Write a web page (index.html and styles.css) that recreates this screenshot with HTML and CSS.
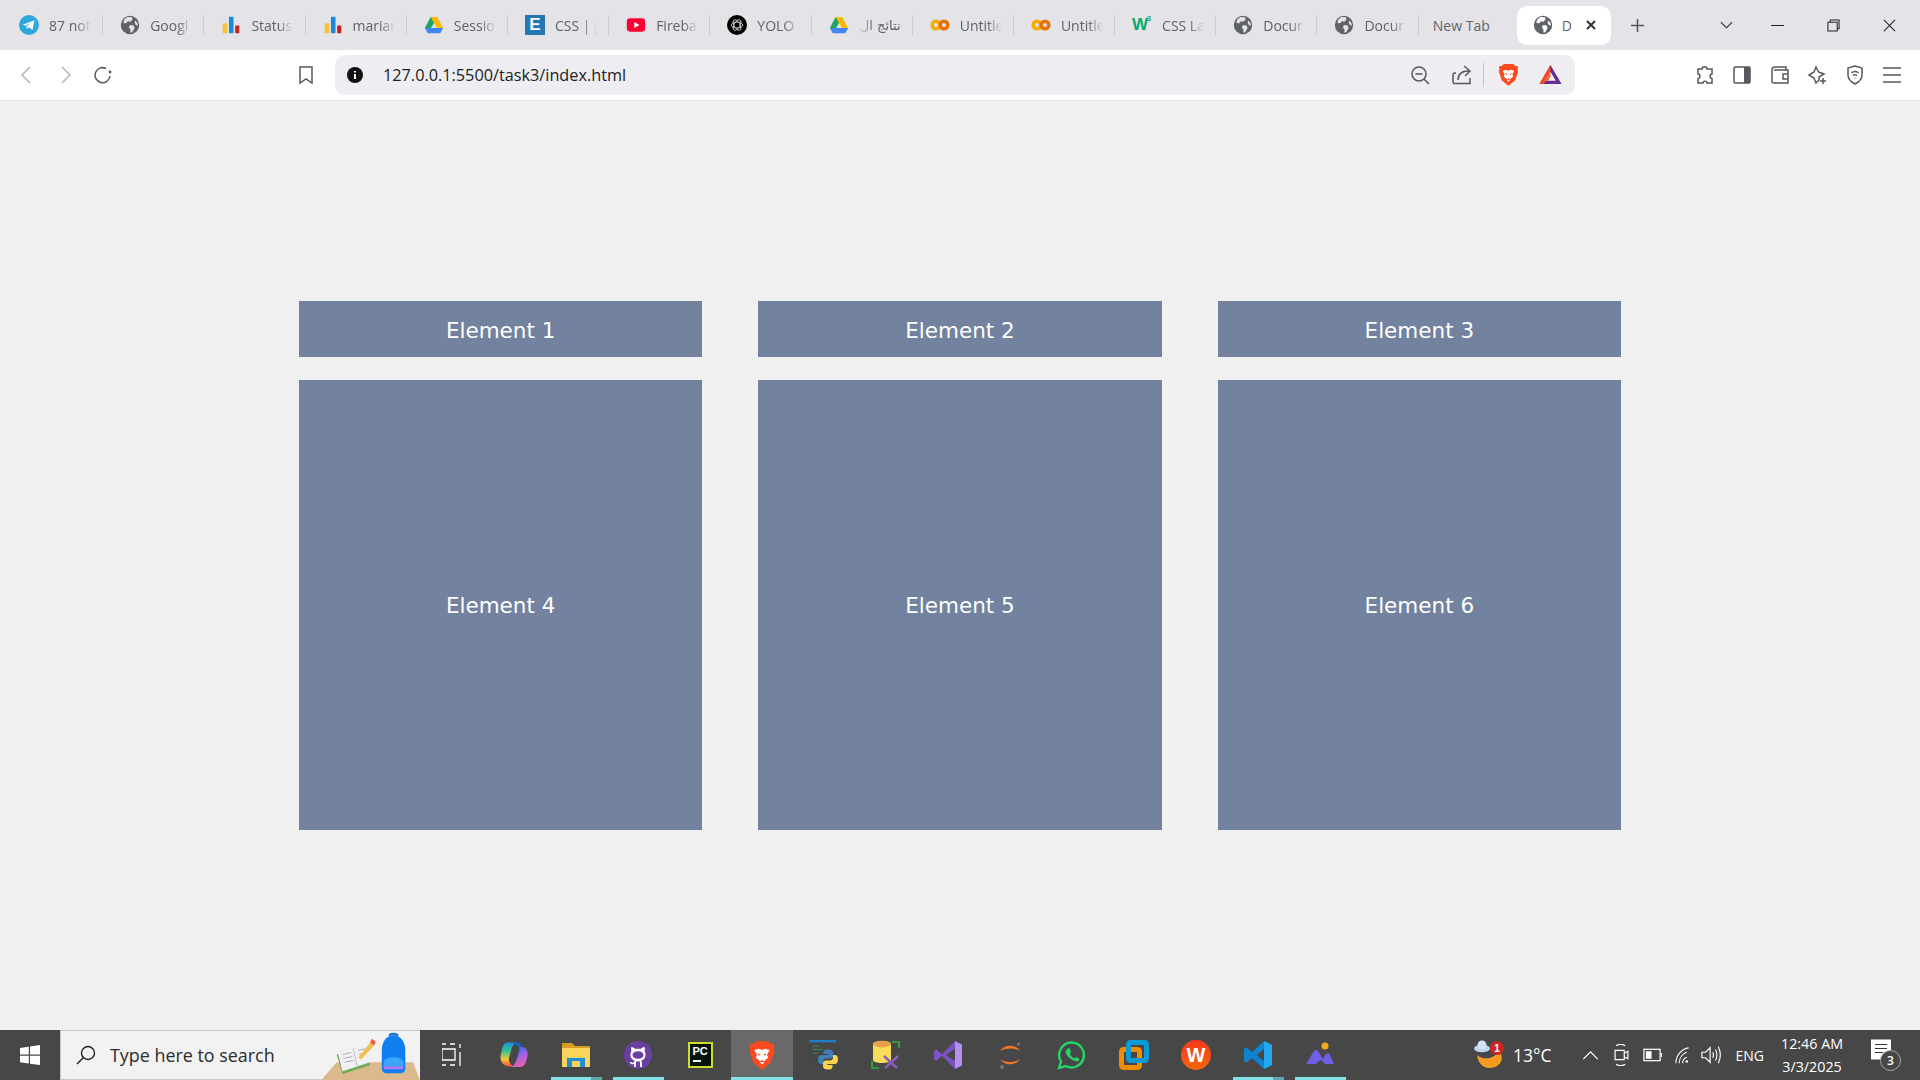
FILE: index.html
```html
<!DOCTYPE html>
<html lang="en">
<head>
    <meta charset="UTF-8">
    <meta name="viewport" content="width=device-width, initial-scale=1.0">
    <title>Document</title>
    <link rel="stylesheet" href="styles.css">
</head>
<body>
    <svg class="icon-defs" aria-hidden="true">
        <symbol id="i-telegram" viewBox="0 0 24 24">
            <circle cx="12" cy="12" r="12" fill="#2ea6de"/>
            <path d="M4.5 11.8 18.5 6.3 16.2 18 11.6 14.6 9.4 16.8 9 13.4 15.6 8.6 7.6 12.9Z" fill="#fff"/>
        </symbol>
        <symbol id="i-globe" viewBox="0 0 24 24">
            <circle cx="12" cy="12" r="11" fill="#5f6368"/>
            <path d="M9 2.5 14.5 2.6 15 5.5 12.5 8 9.5 7.5 7.5 10 4 9.5 5 5.5ZM12 12 16.5 12.5 17.5 15.5 14.5 21 12.5 21 12.5 17 10.5 15ZM18.5 6.5 21 10 21.5 13 19 12 17.5 9Z" fill="var(--hole, #e3e3e8)"/>
        </symbol>
        <symbol id="i-bars" viewBox="0 0 24 24">
            <rect x="2" y="10" width="5.5" height="12" rx="1" fill="#f5c33b"/>
            <rect x="9.5" y="2" width="5.5" height="20" rx="1" fill="#1e88d6"/>
            <rect x="17" y="12.5" width="5" height="9.5" rx="1" fill="#c5221f"/>
        </symbol>
        <symbol id="i-drive" viewBox="0 0 24 24">
            <path d="M8 2.5H16L8.5 15.5H1Z" fill="#1fa463"/>
            <path d="M16 2.5 23 15.5H15.5L8 2.5Z" fill="#ffba00"/>
            <path d="M5 15.5H23L19.500 22H4.500L1 15.500Z" fill="#4285f4"/>
        </symbol>
        <symbol id="i-youtube" viewBox="0 0 24 24">
            <rect x="1" y="4" width="22" height="16" rx="4" fill="#ff0033"/>
            <path d="M10 8.500 16 12 10 15.500Z" fill="#fff"/>
        </symbol>
        <symbol id="i-openai" viewBox="0 0 24 24">
            <circle cx="12" cy="12" r="12" fill="#000"/>
            <g fill="none" stroke="#ddd" stroke-width="1">
                <ellipse cx="12" cy="12" rx="7" ry="3.500"/>
                <ellipse cx="12" cy="12" rx="7" ry="3.500" transform="rotate(60 12 12)"/>
                <ellipse cx="12" cy="12" rx="7" ry="3.500" transform="rotate(120 12 12)"/>
            </g>
        </symbol>
        <symbol id="i-colab" viewBox="0 0 24 24">
            <circle cx="7.200" cy="12" r="4.600" fill="none" stroke="#f9ab00" stroke-width="4.200"/>
            <circle cx="16.800" cy="12" r="4.600" fill="none" stroke="#e8710a" stroke-width="4.200"/>
        </symbol>
        <symbol id="i-brave" viewBox="0 0 24 24">
            <path d="M7 1H17L19 3 22 3.500 21.500 7 22 9 19 18 12.500 23.500H11.500L5 18 2 9 2.500 7 2 3.500 5 3Z" fill="#fb4a1f"/>
            <path d="M6 8 9.500 7 12 8 14.500 7 18 8 16 12 17 14 13.500 17 12 16 10.500 17 7 14 8 12Z" fill="#fff"/>
            <path d="M10 17.500H14L12 19.500Z" fill="#fff"/>
            <path d="M8.500 10.500 11 11.500 9.500 12.500ZM15.500 10.500 13 11.500 14.500 12.500Z" fill="#fb4a1f"/>
        </symbol>
        <symbol id="i-bat" viewBox="0 0 24 24">
            <path d="M12 2 23.500 22H.5Z" fill="#662d91"/>
            <path d="M12 2 .5 22H5L12 9.500Z" fill="#ff4724"/>
            <path d="M12 9 17.500 18.500H6.500Z" fill="#eeeef2"/>
            <path d="M12 9 6.500 18.500H9.500L12 14Z" fill="#f26a2e"/>
        </symbol>
        <symbol id="i-copilot" viewBox="0 0 30 30">
            <defs>
                <linearGradient id="g-cop1" x1="0.5" y1="0" x2="0.5" y2="1"><stop offset="0" stop-color="#1c8fe0"/><stop offset=".35" stop-color="#35c08a"/><stop offset=".7" stop-color="#f7c63c"/><stop offset="1" stop-color="#ef4e3e"/></linearGradient>
                <linearGradient id="g-cop2" x1="0.3" y1="0" x2="0.7" y2="1"><stop offset="0" stop-color="#2a6fe8"/><stop offset=".45" stop-color="#9a63e6"/><stop offset="1" stop-color="#f062a8"/></linearGradient>
            </defs>
            <path d="M9 2.500H18C14.500 3.500 13.500 6 12.500 9L10 18C9.500 20 10 23 14 26.500H10C5 26.500 1 22 1.500 16L3 9C3.800 5 6 2.500 9 2.500Z" fill="url(#g-cop1)"/>
            <path d="M20 7H23C27 7 29.500 11 28.500 16L27 22C26 25 24 27 20 27H11C15 26 16.500 23 17.500 20L20 12C20.500 10 21 8 20 7Z" fill="url(#g-cop2)"/>
            <path d="M13 2.500H18C21 2.500 22.500 4 23 7H20C18.500 5 16 4 13 2.500Z" fill="#1560d8"/>
        </symbol>
        <symbol id="i-folder" viewBox="0 0 30 30">
            <path d="M1 3H11L14 6H29V27H1Z" fill="#d99c22"/>
            <rect x="1" y="8" width="28" height="19" rx="1" fill="#fbd45c"/>
            <rect x="6" y="18" width="18" height="9" fill="#1f8fd8"/>
            <rect x="11" y="21" width="8" height="6" fill="#fbd45c"/>
        </symbol>
        <symbol id="i-github" viewBox="0 0 30 30">
            <circle cx="15" cy="15" r="14" fill="#6b3fa0"/>
            <path d="M8.500 7C10 7 11.500 8 12.500 9 14 8.600 16 8.600 17.500 9 18.500 8 20 7 21.500 7 22 8.500 22 10 21.500 11 23 13 23 17 21 19 20 20 19 20.500 18 20.700 19 21.500 19 23 19 27H11C11 25 11 24.500 11 24 9 24.500 7.500 24 6.500 22 8 22 9 23 11 22.500 11 21.700 11 21 12 20.700 11 20.500 10 20 9 19 7 17 7 13 8.500 11 8 10 8 8.500 8.500 7Z" fill="#fff"/>
            <ellipse cx="15" cy="15" rx="5.500" ry="3.800" fill="#6b3fa0"/>
            <rect x="13" y="21.500" width="4" height="6" fill="#6b3fa0"/>
        </symbol>
        <symbol id="i-python" viewBox="0 0 30 30">
            <rect x="1" y="1" width="26" height="22" fill="none" stroke="#3d4650" stroke-width="1.400"/>
            <rect x="0" y="0" width="27" height="2.400" fill="#1f7fc4"/>
            <path d="M4 6H10M4 9.500H14M4 13H9" stroke="#2f8f46" stroke-width="1.200"/>
            <path d="M19 9.500C15 9.500 14.500 11 14.500 12.500V14H19.500V15H12.500C10 15 9 17 9 19.500 9 22 10 24 12 24H14V21.500C14 19.500 15.500 18.500 17 18.500H21C23 18.500 24 17.500 24 16V12.500C24 10.500 22 9.500 19 9.500Z" fill="#3f80b8"/>
            <path d="M19 29.500C23 29.500 23.500 28 23.500 26.500V25H18.500V24H25.500C28 24 29 22 29 19.500 29 17 28 15 26 15H24V17.500C24 19.500 22.500 20.500 21 20.500H17C15 20.500 14 21.500 14 23V26.500C14 28.500 16 29.500 19 29.500Z" fill="#f7d34e"/>
        </symbol>
        <symbol id="i-dbtool" viewBox="0 0 30 30">
            <path d="M21 2H28V8M1 21V28H8" fill="none" stroke="#2f9b3c" stroke-width="2.200"/>
            <path d="M2 4C2 0 20 0 20 4V20C20 24 2 24 2 20Z" fill="#f8dc5a"/>
            <ellipse cx="11" cy="4" rx="9" ry="3.200" fill="#e5a04b"/>
            <path d="M13 16 26 28M27 16 14 28" stroke="#8d5cc0" stroke-width="2.400"/>
        </symbol>
        <symbol id="i-vs" viewBox="0 0 30 30">
            <path d="M22 1 9 14 3.500 9.500 1 10.500V19.500L3.500 20.500 9 16 22 29V21L13 15 22 9Z" fill="#7a52c4"/>
            <path d="M22 1 29 4.500V25.500L22 29Z" fill="#b48ef0"/>
        </symbol>
        <symbol id="i-jupyter" viewBox="0 0 30 30">
            <path d="M5 11C9 4 21 4 25 11 20 7.500 10 7.500 5 11ZM5 19C10 23 20 23 25 19 21 26 9 26 5 19Z" fill="#f37726"/>
            <circle cx="23.500" cy="4" r="1.600" fill="#767677"/>
            <circle cx="7" cy="27" r="2" fill="#767677"/>
        </symbol>
        <symbol id="i-whatsapp" viewBox="0 0 30 30">
            <path d="M15 2.500A12.500 12.500 0 1 1 8.500 26L2 28 4 21.500A12.500 12.500 0 0 1 15 2.500Z" fill="none" stroke="#25d366" stroke-width="2.400"/>
            <path d="M10.500 8.500 12.500 8 14 12 13 14C14 16 15.500 17.500 17.500 18.500L19.500 17 22.500 19 21.500 21C18 22.500 9 17 8.500 11.500Z" fill="#25d366"/>
        </symbol>
        <symbol id="i-vmware" viewBox="0 0 30 30">
            <rect x="2.500" y="9.500" width="18" height="18" rx="2" fill="none" stroke="#f28c00" stroke-width="5"/>
            <rect x="9.500" y="2.500" width="18" height="18" rx="2" fill="none" stroke="#0d9bd8" stroke-width="5"/>
        </symbol>
        <symbol id="i-vscode" viewBox="0 0 30 30">
            <path d="M21 1 29 5V25L21 29 9 18 3.500 22.500 1 21V9L3.500 7.500 9 12ZM21 9 13.500 15 21 21Z" fill="#0e83d0"/>
            <path d="M21 1 29 5V25L21 29Z" fill="#23a9f2"/>
        </symbol>
        <symbol id="i-mountain" viewBox="0 0 30 30">
            <circle cx="20" cy="6" r="3.500" fill="#f4a91f"/>
            <path d="M1 24 9 11C10 9.500 12 9.500 13 11L18 19 21 14C22 13 23.500 13 24.500 14L29 24H20L17 21C16 20 15 20 14 21L11 24Z" fill="#6f60ea"/>
        </symbol>
    </svg>

    <header class="tab-strip">
        <div class="tab"><svg class="tab-icon"><use href="#i-telegram"/></svg><span class="tab-title">87 not</span></div>
        <div class="tab"><svg class="tab-icon"><use href="#i-globe"/></svg><span class="tab-title">Googl</span></div>
        <div class="tab"><svg class="tab-icon"><use href="#i-bars"/></svg><span class="tab-title">Status</span></div>
        <div class="tab"><svg class="tab-icon"><use href="#i-bars"/></svg><span class="tab-title">marian</span></div>
        <div class="tab"><svg class="tab-icon"><use href="#i-drive"/></svg><span class="tab-title">Sessio</span></div>
        <div class="tab"><span class="edu-logo">E</span><span class="tab-title">CSS | g</span></div>
        <div class="tab"><svg class="tab-icon"><use href="#i-youtube"/></svg><span class="tab-title">Fireba</span></div>
        <div class="tab"><svg class="tab-icon"><use href="#i-openai"/></svg><span class="tab-title">YOLO</span></div>
        <div class="tab"><svg class="tab-icon"><use href="#i-drive"/></svg><span class="tab-title tab-title-rtl" dir="rtl">نتائج ال</span></div>
        <div class="tab"><svg class="tab-icon"><use href="#i-colab"/></svg><span class="tab-title">Untitle</span></div>
        <div class="tab"><svg class="tab-icon"><use href="#i-colab"/></svg><span class="tab-title">Untitle</span></div>
        <div class="tab"><span class="w3-logo">W<sup>3</sup></span><span class="tab-title">CSS La</span></div>
        <div class="tab"><svg class="tab-icon"><use href="#i-globe"/></svg><span class="tab-title">Docur</span></div>
        <div class="tab"><svg class="tab-icon"><use href="#i-globe"/></svg><span class="tab-title">Docur</span></div>
        <div class="tab tab-plain"><span class="tab-title-plain">New Tab</span></div>
        <div class="tab-active">
            <svg class="tab-icon"><use href="#i-globe"/></svg>
            <span class="tab-title-short">D</span>
            <svg class="tab-close" viewBox="0 0 12 12"><path d="M2 2 10 10M10 2 2 10"/></svg>
        </div>
        <svg class="new-tab" viewBox="0 0 16 16"><path d="M8 1V15M1 8H15"/></svg>
        <div class="window-controls">
            <svg class="win-chevron" viewBox="0 0 14 8"><path d="M1 1 7 7 13 1"/></svg>
            <span class="win-btn"><svg viewBox="0 0 14 14"><path d="M0 7H14"/></svg></span>
            <span class="win-btn"><svg viewBox="0 0 14 14"><path d="M3.500 3V1H13V10.500H11M1 3.500H11V13H1Z"/></svg></span>
            <span class="win-btn"><svg viewBox="0 0 14 14"><path d="M1 1 13 13M13 1 1 13"/></svg></span>
        </div>
    </header>

    <nav class="toolbar">
        <span class="tool-btn"><svg class="stroke-icon is-dim" viewBox="0 0 20 20"><path d="M13 2 5 10 13 18"/></svg></span>
        <span class="tool-btn"><svg class="stroke-icon is-dim" viewBox="0 0 20 20"><path d="M7 2 15 10 7 18"/></svg></span>
        <span class="tool-btn"><svg class="stroke-icon" viewBox="0 0 20 20"><path d="M17 11A7.500 7.500 0 1 1 13 3.500"/><circle cx="17" cy="7" r="1.400" class="dot"/></svg></span>
        <span class="tool-btn bookmark"><svg class="stroke-icon" viewBox="0 0 20 20"><path d="M4 2H16V18L10 14 4 18Z"/></svg></span>
        <div class="address-bar">
            <svg class="info-icon" viewBox="0 0 16 16"><circle cx="8" cy="8" r="8"/><path d="M8 7V12M8 4V5.500"/></svg>
            <span class="url">127.0.0.1:5500/task3/index.html</span>
            <span class="tool-btn"><svg class="stroke-icon" viewBox="0 0 20 20"><circle cx="9" cy="9" r="7"/><path d="M5.500 9H12.500M14 14 19 19"/></svg></span>
            <span class="tool-btn share"><svg class="stroke-icon" viewBox="0 0 20 20"><path d="M1 18V10C1 9 2 8 3 8H4M1 18.500H18V13M6 15C6 9 10 6 17 6M12 1 18 6 13 11"/></svg></span>
            <span class="addr-divider"></span>
            <span class="tool-btn"><svg class="shield-icon"><use href="#i-brave"/></svg></span>
            <span class="tool-btn rewards"><svg class="shield-icon"><use href="#i-bat"/></svg></span>
        </div>
        <div class="toolbar-tools">
            <span class="tool-btn"><svg class="stroke-icon" viewBox="0 0 20 20"><path d="M7 4C7 1 12 1 12 4H17V9C14.500 9 14.500 13.500 17 13.500V18H12C12 15.500 8 15.500 8 18H3V13.500C5.500 13.500 5.500 9 3 9V4Z"/></svg></span>
            <span class="tool-btn"><svg class="stroke-icon" viewBox="0 0 20 20"><rect x="2" y="2" width="16" height="16" rx="1"/><rect x="12" y="2" width="6" height="16" class="dot"/></svg></span>
            <span class="tool-btn"><svg class="stroke-icon" viewBox="0 0 20 20"><path d="M2 5C2 3 3 2 5 2H16V5M2 5V16C2 17 3 18 4 18H18V5H4M18 9H13V14H18"/></svg></span>
            <span class="tool-btn"><svg class="stroke-icon" viewBox="0 0 20 20"><path d="M9 2 11.500 7 17 9 12 12 12 15 9 18 7 13 2 10 7 7ZM16 13V19M13 16H19"/></svg></span>
            <span class="tool-btn"><svg class="stroke-icon" viewBox="0 0 20 20"><path d="M10 1 17 3V10C17 14 14 17 10 19 6 17 3 14 3 10V3ZM6.500 8C8.500 6 11.500 6 13.500 8M8 10.500C9 9.500 11 9.500 12 10.500M10 13V13.500"/></svg></span>
            <span class="tool-btn"><svg class="stroke-icon" viewBox="0 0 20 20"><path d="M1 3H19M1 10H19M1 17H19"/></svg></span>
        </div>
    </nav>

    <main class="page">
        <div class="grid">
            <div class="item">Element 1</div>
            <div class="item">Element 2</div>
            <div class="item">Element 3</div>
            <div class="item">Element 4</div>
            <div class="item">Element 5</div>
            <div class="item">Element 6</div>
        </div>
    </main>

    <footer class="taskbar">
        <span class="start"><svg viewBox="0 0 20 20"><path d="M0 3 8.800 1.700V9.500H0ZM10 1.500 20 0V9.500H10ZM0 10.700H8.800V18.500L0 17.200ZM10 10.700H20V20L10 18.700Z"/></svg></span>
        <div class="search">
            <svg class="search-glass" viewBox="0 0 20 20"><circle cx="12" cy="8" r="6.500"/><path d="M7.500 12.500 1 19"/></svg>
            <span class="search-text">Type here to search</span>
            <svg class="search-art" viewBox="0 0 98 50">
                <path d="M14 32H92L98 48V50H0V48Z" fill="#dcb98c"/>
                <path d="M14 24 44 16 48 35 20 44Z" fill="#6fae55"/>
                <path d="M15 22 45 14 48 32 20 41Z" fill="#f1f1f4"/>
                <path d="M31 18 35 37" stroke="#b8b8c4" stroke-width="1"/>
                <path d="M20 24 29 22M21 28 30 26M22 32 31 30M36 20 43 18M37 24 44 22" stroke="#a9a9b5" stroke-width="1"/>
                <path d="M36 27 48 12 52 15 39 29Z" fill="#f3c14e"/>
                <path d="M48 12 50 8 54 11 52 15Z" fill="#ef5d45"/>
                <path d="M60 20C60 10 65 5 72 4 79 5 84 10 84 20V38C84 41 82 43 80 43H64C62 43 60 41 60 38Z" fill="#0f7ff0"/>
                <path d="M68 5C68 2 76 2 76 5" fill="none" stroke="#0f6fd0" stroke-width="2"/>
                <path d="M62 32C62 25 82 25 82 32V36H62Z" fill="#39a6f7"/>
                <path d="M62 36H82V39H62Z" fill="#b37cf0"/>
            </svg>
        </div>
        <span class="task-item task-first"><svg class="task-view" viewBox="0 0 20 24"><path d="M0 1H4M8 1H13M0 6H13V17H0ZM0 22H4M8 22H13M18 1V5M18 9V23"/></svg></span>
        <span class="task-item"><svg class="task-icon"><use href="#i-copilot"/></svg></span>
        <span class="task-item is-open is-stacked"><svg class="task-icon"><use href="#i-folder"/></svg></span>
        <span class="task-item is-open"><svg class="task-icon"><use href="#i-github"/></svg></span>
        <span class="task-item"><span class="pc-logo">PC<i class="pc-bar"></i></span></span>
        <span class="task-item is-open is-active"><svg class="task-icon"><use href="#i-brave"/></svg></span>
        <span class="task-item"><svg class="task-icon"><use href="#i-python"/></svg></span>
        <span class="task-item"><svg class="task-icon"><use href="#i-dbtool"/></svg></span>
        <span class="task-item"><svg class="task-icon"><use href="#i-vs"/></svg></span>
        <span class="task-item"><svg class="task-icon"><use href="#i-jupyter"/></svg></span>
        <span class="task-item"><svg class="task-icon"><use href="#i-whatsapp"/></svg></span>
        <span class="task-item"><svg class="task-icon"><use href="#i-vmware"/></svg></span>
        <span class="task-item"><span class="wps-logo">W</span></span>
        <span class="task-item is-open is-stacked"><svg class="task-icon"><use href="#i-vscode"/></svg></span>
        <span class="task-item is-open"><svg class="task-icon"><use href="#i-mountain"/></svg></span>

        <div class="tray">
            <span class="weather">
                <svg class="weather-icon" viewBox="0 0 30 32">
                    <path d="M3 16C9 21 19 21 25 12 31 19 27 29 15 29 9 29 4 24 3 16Z" fill="#f59a23"/>
                    <ellipse cx="8" cy="9.500" rx="8" ry="3.800" fill="#bcd4ee"/>
                    <circle cx="8" cy="6" r="4.500" fill="#d3e3f4"/>
                    <circle cx="23" cy="9" r="7" fill="#c8261e"/>
                    <text x="23" y="12.500" class="weather-badge" text-anchor="middle">1</text>
                </svg>
                <span class="temp">13°C</span>
            </span>
            <svg class="tray-icon chev" viewBox="0 0 18 10"><path d="M1 9 9 1 17 9"/></svg>
            <svg class="tray-icon cam" viewBox="0 0 16 24"><path d="M2 2C5 0 9 0 12 2M2 22C5 24 9 24 12 22M1 7H11V17H1ZM11 10 15 8V16L11 14"/></svg>
            <svg class="tray-icon batt" viewBox="0 0 20 14"><rect x="1" y="1" width="17" height="12"/><rect x="3" y="3" width="6" height="8" class="dot"/><path d="M19.500 5V9"/></svg>
            <svg class="tray-icon wifi" viewBox="0 0 20 20"><path d="M1 19C1 10 8 2 16 1M5 19C5 13 9 8 14 6M9 19C9 16 11 13 14 12"/><circle cx="14" cy="17" r="1.500" class="dot"/></svg>
            <svg class="tray-icon vol" viewBox="0 0 22 22"><path d="M1 8H5L10 3V19L5 14H1ZM13 8C14 10 14 12 13 14M16 5C18 9 18 13 16 17M19 2C22 8 22 14 19 20"/></svg>
            <span class="lang">ENG</span>
            <span class="clock"><span>12:46 AM</span><span>3/3/2025</span></span>
            <span class="notif">
                <svg class="notif-icon" viewBox="0 0 20 20"><rect width="20" height="20" class="notif-fill"/><path d="M4 5H16M4 9H16M4 13H12" class="notif-lines"/></svg>
                <span class="notif-count">3</span>
            </span>
        </div>
    </footer>
</body>
</html>
```

FILE: styles.css
```css
* {
    box-sizing: border-box;
}
html, body {
    height: 100%;
}
body {
    margin: 0;
    display: flex;
    flex-direction: column;
    overflow: hidden;
    background: #f0f0f0;
    font-family: "Open Sans", "Noto Sans", sans-serif;
}
.icon-defs {
    width: 0;
    height: 0;
    position: absolute;
}

/* tabs */
.tab-strip {
    height: 50px;
    flex: none;
    display: flex;
    align-items: center;
    padding: 0 3px 0 2px;
    background: #e3e3e8;
}
.tab {
    width: 101.200px;
    height: 20px;
    flex: none;
    display: flex;
    align-items: center;
    gap: 10px;
    padding-left: 17px;
    border-right: 1px solid #cdcdd3;
}
.tab-plain {
    width: 98.200px;
    padding-left: 14.200px;
    border-right: 0;
}
.tab-icon {
    width: 20px;
    height: 20px;
    flex: none;
}
.edu-logo {
    width: 20px;
    height: 20px;
    flex: none;
    display: flex;
    align-items: center;
    justify-content: center;
    background: #2477b3;
    color: #fff;
    font-family: "Liberation Sans", sans-serif;
    font-size: 17px;
    font-weight: bold;
}
.w3-logo {
    width: 20px;
    height: 20px;
    flex: none;
    overflow: hidden;
    color: #04aa6d;
    font-family: "Liberation Sans", sans-serif;
    font-size: 17px;
    font-weight: bold;
    line-height: 20px;
    white-space: nowrap;
    letter-spacing: -1px;
}
.w3-logo sup {
    font-size: 7px;
    line-height: 0;
    vertical-align: 9px;
}
.tab-title {
    width: 42px;
    overflow: hidden;
    white-space: nowrap;
    font-size: 14px;
    color: #5f6368;
    -webkit-mask-image: linear-gradient(to right, #000 65%, transparent);
    mask-image: linear-gradient(to right, #000 65%, transparent);
}
.tab-title-rtl {
    font-family: "DejaVu Sans", sans-serif;
    font-size: 13px;
    -webkit-mask-image: linear-gradient(to left, #000 65%, transparent);
    mask-image: linear-gradient(to left, #000 65%, transparent);
}
.tab-title-plain {
    font-size: 14px;
    color: #5f6368;
    white-space: nowrap;
}
.tab-active {
    --hole: #fff;
    width: 94px;
    height: 39px;
    flex: none;
    display: flex;
    align-items: center;
    padding-left: 16px;
    border-radius: 10px;
    background: #fff;
}
.tab-title-short {
    width: 23px;
    margin-left: 9px;
    font-size: 14px;
    color: #5f6368;
}
.tab-close {
    width: 12px;
    height: 12px;
    fill: none;
    stroke: #333;
    stroke-width: 2;
}
.new-tab {
    width: 15px;
    height: 15px;
    margin-left: 19px;
    fill: none;
    stroke: #555;
    stroke-width: 1.6;
}
.window-controls {
    margin-left: auto;
    display: flex;
    align-items: center;
}
.win-chevron {
    width: 13px;
    height: 8px;
    margin-right: 16px;
    fill: none;
    stroke: #555;
    stroke-width: 1.6;
}
.win-btn {
    width: 56px;
    display: flex;
    justify-content: center;
}
.win-btn svg {
    width: 13px;
    height: 13px;
    fill: none;
    stroke: #222;
    stroke-width: 1.1;
}

/* toolbar */
.toolbar {
    height: 51px;
    flex: none;
    display: flex;
    align-items: center;
    padding: 0 9px 1px 8px;
    background: #fff;
    border-bottom: 1px solid #e4e4e8;
}
.tool-btn {
    width: 38px;
    height: 38px;
    flex: none;
    display: flex;
    align-items: center;
    justify-content: center;
}
.stroke-icon {
    width: 20px;
    height: 20px;
    fill: none;
    stroke: #56585e;
    stroke-width: 1.5;
}
.stroke-icon .dot {
    fill: #56585e;
    stroke: none;
}
.stroke-icon.is-dim {
    stroke: #b4b5ba;
}
.bookmark {
    margin-left: 165px;
}
.address-bar {
    width: 1240px;
    height: 40px;
    flex: none;
    margin-left: 10px;
    display: flex;
    align-items: center;
    padding: 0 6px 0 12px;
    border-radius: 10px;
    background: #eeeef2;
}
.info-icon {
    width: 16px;
    height: 16px;
    flex: none;
}
.info-icon circle {
    fill: #111;
}
.info-icon path {
    stroke: #fff;
    stroke-width: 2;
}
.url {
    flex: 1;
    margin-left: 20px;
    font-size: 16.250px;
    color: #202124;
}
.share {
    margin-left: 4px;
}
.addr-divider {
    width: 1px;
    height: 24px;
    margin: 0 5px 0 2px;
    background: #c4c4ca;
}
.rewards {
    margin-left: 4px;
}
.shield-icon {
    width: 23px;
    height: 25px;
}
.toolbar-tools {
    margin-left: auto;
    width: 225px;
    display: flex;
    justify-content: space-between;
}
.toolbar-tools .tool-btn {
    width: 37.400px;
}

/* page content */
.page {
    flex: 1;
    padding-top: 200px;
}
.grid {
    width: 1322px;
    margin: 0 auto;
    display: grid;
    grid-template-columns: repeat(3, 1fr);
    grid-template-rows: 56px 450px;
    gap: 23px 56px;
}
.item {
    display: flex;
    align-items: center;
    justify-content: center;
    padding-top: 2px;
    background: #73829e;
    color: #fff;
    font-family: "DejaVu Sans", Verdana, sans-serif;
    font-size: 21.500px;
}
.item:nth-child(n+4) {
    padding-top: 1px;
}

/* taskbar */
.taskbar {
    height: 50px;
    flex: none;
    display: flex;
    align-items: center;
    background: #474747;
}
.start {
    width: 60px;
    display: flex;
    justify-content: center;
}
.start svg {
    width: 20px;
    height: 20px;
    fill: #fff;
}
.search {
    width: 360px;
    height: 50px;
    flex: none;
    display: flex;
    align-items: center;
    padding-left: 15px;
    background: #f2f2f2;
    border: 1px solid #c8c8c8;
    border-right: 0;
}
.search-glass {
    width: 20px;
    height: 20px;
    fill: none;
    stroke: #222;
    stroke-width: 1.400;
}
.search-text {
    margin-left: 14px;
    font-size: 17.900px;
    color: #2b2b2b;
}
.search-art {
    width: 98px;
    height: 49px;
    margin-left: auto;
}
.task-item {
    position: relative;
    width: 62px;
    height: 50px;
    flex: none;
    display: flex;
    align-items: center;
    justify-content: center;
}
.task-first {
    width: 63px;
}
.task-item.is-active {
    background: #696969;
}
.task-item.is-open::after {
    content: "";
    position: absolute;
    bottom: 0;
    left: 6px;
    right: 5px;
    height: 3px;
    background: #82e0e8;
}
.task-item.is-active::after {
    left: 0;
    right: 0;
}
.task-item.is-stacked::after {
    background: linear-gradient(to right, #82e0e8 79%, #5fa8ac 79%);
}
.task-icon {
    width: 30px;
    height: 30px;
}
.task-view {
    width: 20px;
    height: 24px;
    fill: none;
    stroke: #fff;
    stroke-width: 1.300;
}
.pc-logo {
    width: 25px;
    height: 26px;
    display: flex;
    flex-direction: column;
    align-items: flex-start;
    padding: 2px 0 0 3px;
    background: #04140c;
    border: 2px solid #cfdc2a;
    color: #fff;
    font-family: "Liberation Sans", sans-serif;
    font-size: 11px;
    font-weight: bold;
    line-height: 11px;
}
.pc-bar {
    width: 8px;
    height: 2px;
    margin-top: 3px;
    background: #fff;
}
.wps-logo {
    width: 30px;
    height: 30px;
    display: flex;
    align-items: center;
    justify-content: center;
    border-radius: 50%;
    background: linear-gradient(#f8391d, #f4650f);
    color: #fff;
    font-family: "Liberation Sans", sans-serif;
    font-size: 20px;
    font-weight: bold;
}

/* tray */
.tray {
    margin-left: auto;
    display: flex;
    align-items: center;
    height: 50px;
    color: #fff;
}
.weather {
    display: flex;
    align-items: center;
}
.weather-icon {
    width: 30px;
    height: 32px;
}
.weather-badge {
    fill: #fff;
    font-family: "Liberation Sans", sans-serif;
    font-size: 10px;
    font-weight: bold;
}
.temp {
    margin-left: 8.500px;
    font-size: 17.500px;
}
.tray-icon {
    fill: none;
    stroke: #fff;
    stroke-width: 1.300;
    flex: none;
}
.tray-icon .dot {
    fill: #fff;
    stroke: none;
}
.chev {
    width: 17px;
    height: 9px;
    margin-left: 30px;
}
.cam {
    width: 15px;
    height: 22px;
    margin-left: 15px;
}
.batt {
    width: 19px;
    height: 14px;
    margin-left: 14px;
}
.wifi {
    width: 17px;
    height: 17px;
    margin-left: 13px;
}
.vol {
    width: 20px;
    height: 20px;
    margin-left: 9px;
}
.lang {
    margin-left: 15px;
    font-size: 14px;
}
.clock {
    width: 62px;
    margin-left: 17px;
    display: flex;
    flex-direction: column;
    align-items: center;
    gap: 5px;
    font-size: 14.300px;
    line-height: 18px;
    white-space: nowrap;
}
.notif {
    position: relative;
    width: 36px;
    height: 32px;
    margin: 0 13px 0 28px;
}
.notif-icon {
    width: 20px;
    height: 21px;
    display: block;
}
.notif-fill {
    fill: #fff;
}
.notif-lines {
    fill: none;
    stroke: #333;
    stroke-width: 1.200;
}
.notif-count {
    position: absolute;
    left: 9px;
    top: 11px;
    width: 21px;
    height: 21px;
    display: flex;
    align-items: center;
    justify-content: center;
    border: 1px solid #aaa;
    border-radius: 50%;
    background: #474747;
    font-size: 12px;
    font-weight: 600;
}
```
